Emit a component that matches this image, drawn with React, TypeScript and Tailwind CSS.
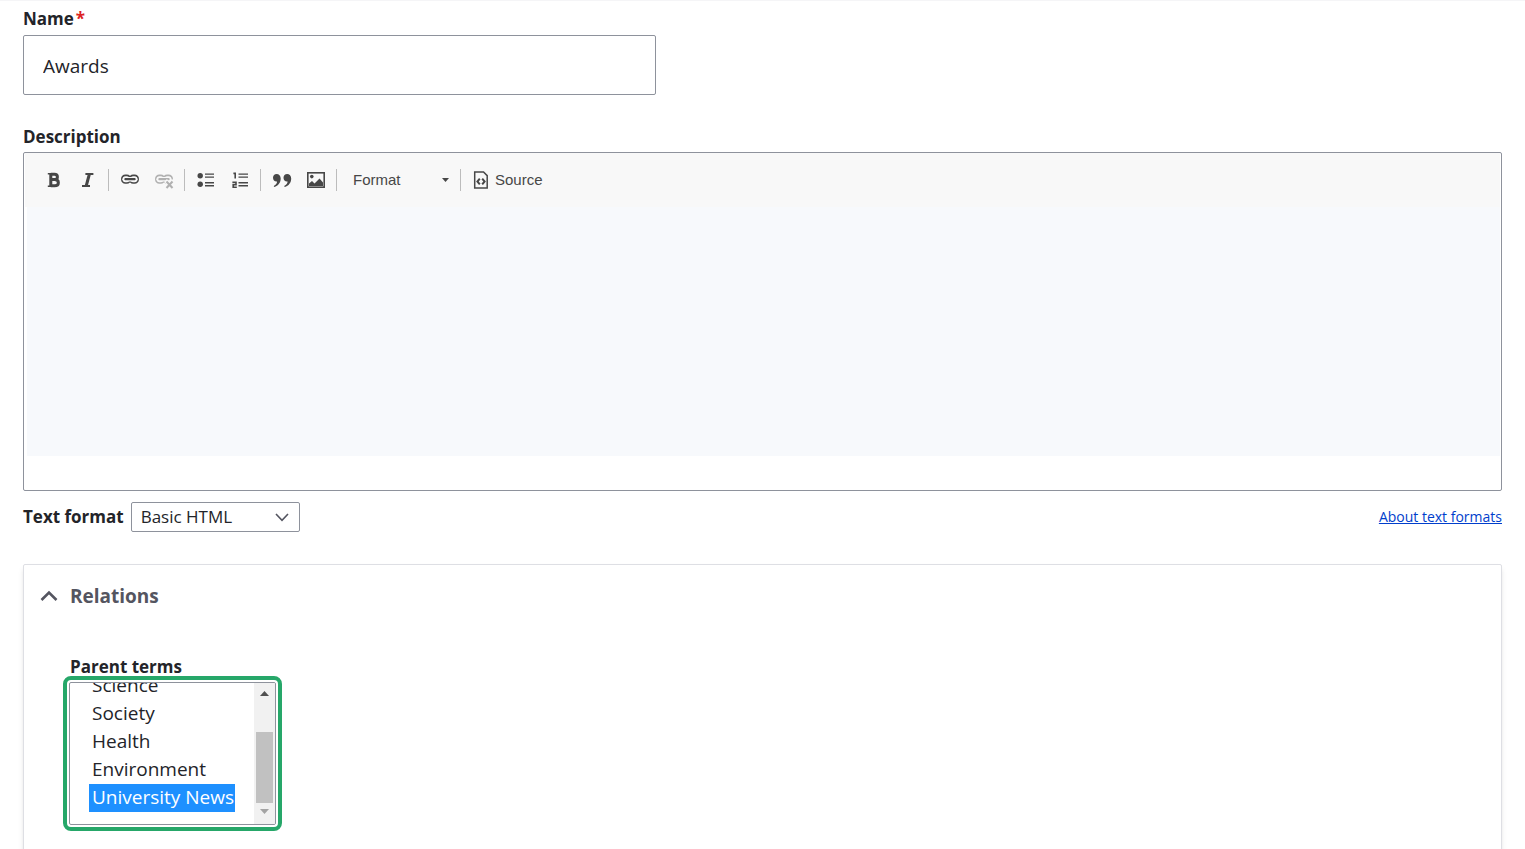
import { useEffect, useRef } from "react";
import type { ReactNode } from "react";

const PARENT_TERMS = [
  "Science",
  "Society",
  "Health",
  "Environment",
  "University News",
];

interface IToolbarButtonProps {
  label: string;
  disabled?: boolean;
  children: ReactNode;
}

function ToolbarButton({ label, disabled, children }: IToolbarButtonProps) {
  return (
    <button
      type="button"
      aria-label={label}
      disabled={disabled}
      className="flex h-6 w-[34px] items-center justify-center text-[#474747] disabled:opacity-40"
    >
      {children}
    </button>
  );
}

function Separator() {
  return <span className="mr-[4px] ml-[3px] h-[22px] w-px bg-[#bcbcbc]" />;
}

function BoldIcon() {
  return (
    <svg width="14" height="16" viewBox="0 0 14 16" fill="none" stroke="currentColor">
      <path d="M3.8 2.2H7.4C11.4 2.2 11.4 7.6 7.4 7.6H3.8M7.6 7.6C12.6 7.6 12.6 13.8 7.6 13.8H3.8M3.8 1V15" strokeWidth="3" />
      <path d="M0.8 1.8H4M0.8 14.2H4" strokeWidth="1.6" />
    </svg>
  );
}

function ItalicIcon() {
  return (
    <svg width="14" height="16" viewBox="0 0 14 16" fill="none" stroke="currentColor">
      <path d="M8.4 2L5.2 14" strokeWidth="3" />
      <path d="M4.4 2H12.4M1 14H9" strokeWidth="2" />
    </svg>
  );
}

function LinkIcon({ broken }: { broken?: boolean }) {
  return (
    <svg width="20" height="18" viewBox="0 0 20 18" fill="none" stroke="currentColor">
      <rect x="1.9" y="4.4" width="8.4" height="7.6" rx="3.4" strokeWidth="1.7" />
      <rect x="9.7" y="4.4" width="8.4" height="7.6" rx="3.4" strokeWidth="1.7" />
      <path d="M4.6 8.2h10.8" stroke="#f8f8f8" strokeWidth="4.4" strokeLinecap="round" />
      <path d="M5.4 8.2h9.2" strokeWidth="2.2" strokeLinecap="round" />
      {broken && (
        <>
          <path d="M11.500 9.500l8 8M19.500 9.500l-8 8" stroke="#f8f8f8" strokeWidth="4" />
          <path d="M12.500 10.500l6 6.500M18.500 10.500l-6 6.500" strokeWidth="2" />
        </>
      )}
    </svg>
  );
}

function BulletedListIcon() {
  return (
    <svg width="18" height="16" viewBox="0 0 18 16" fill="currentColor">
      <circle cx="3.2" cy="3.7" r="2.7" />
      <circle cx="3.2" cy="12.3" r="2.7" />
      <path d="M8 1.4h9v1.4H8zM8 4.4h9v1.4H8zM8 10h9v1.4H8zM8 13h9v1.4H8z" />
    </svg>
  );
}

function NumberedListIcon() {
  return (
    <svg width="18" height="18" viewBox="0 0 18 18" fill="currentColor">
      <path d="M7.5 2.4H17v1.4H7.5zM7.5 5.4H17v1.4H7.5zM7.5 11H17v1.4H7.5zM7.5 14H17v1.4H7.5z" />
      <path
        d="M2.4 2.4H4.2V7.6M1.4 11.2H5V13.6H2.2V16.2H5.8"
        fill="none"
        stroke="currentColor"
        strokeWidth="1.6"
      />
    </svg>
  );
}

function QuoteIcon() {
  return (
    <svg width="20" height="16" viewBox="0 0 20 16" fill="currentColor">
      <path d="M4.6 2C7 2 8.7 3.8 8.7 6.500C8.7 10.700 6.300 13.800 2.200 15L1.700 14C4 12.700 5 11.300 5.100 9.500C2.800 9.900 1 8.200 1 5.700C1 3.500 2.500 2 4.600 2z" />
      <path d="M15.100 2C17.500 2 19.200 3.800 19.200 6.500C19.200 10.700 16.800 13.800 12.700 15L12.200 14C14.500 12.700 15.500 11.300 15.600 9.500C13.300 9.900 11.500 8.200 11.500 5.700C11.500 3.500 13 2 15.100 2z" />
    </svg>
  );
}

function ImageIcon() {
  return (
    <svg width="18" height="16" viewBox="0 0 18 16" fill="currentColor">
      <rect x="0.8" y="0.8" width="16.4" height="14.4" fill="none" stroke="currentColor" strokeWidth="1.6" />
      <circle cx="4.8" cy="4.6" r="1.8" />
      <path d="M2 14V11.5L5 9L7.5 11.5L12.5 6.5L16 10.5V14z" />
    </svg>
  );
}

function SourceIcon() {
  return (
    <svg width="16" height="18" viewBox="0 0 16 18" fill="none" stroke="currentColor">
      <path d="M1.7 0.9H10.5L14.2 4.6V17H1.7z" strokeWidth="1.5" />
      <path d="M6.8 7.6L4.4 10.5L6.8 13.4M9.200 7.6L11.600 10.5L9.200 13.4" strokeWidth="2" />
    </svg>
  );
}

function Toolbar() {
  return (
    <div className="flex h-[54px] items-center bg-[#f8f8f8] pl-3 font-['Liberation_Sans',Arial,sans-serif] text-[15px] text-[#474747]">
      <ToolbarButton label="Bold">
        <BoldIcon />
      </ToolbarButton>
      <ToolbarButton label="Italic">
        <ItalicIcon />
      </ToolbarButton>
      <Separator />
      <ToolbarButton label="Link">
        <LinkIcon />
      </ToolbarButton>
      <ToolbarButton label="Unlink" disabled>
        <LinkIcon broken />
      </ToolbarButton>
      <Separator />
      <ToolbarButton label="Bulleted list">
        <BulletedListIcon />
      </ToolbarButton>
      <ToolbarButton label="Numbered list">
        <NumberedListIcon />
      </ToolbarButton>
      <Separator />
      <ToolbarButton label="Block quote">
        <QuoteIcon />
      </ToolbarButton>
      <ToolbarButton label="Image">
        <ImageIcon />
      </ToolbarButton>
      <Separator />
      <button type="button" className="flex h-6 w-[116px] items-center justify-between pr-2 pl-3">
        Format
        <svg width="7" height="4" viewBox="0 0 7 4" fill="currentColor">
          <path d="M0 0h7L3.5 4z" />
        </svg>
      </button>
      <Separator />
      <button type="button" className="flex h-6 items-center gap-1.5 pl-2">
        <SourceIcon />
        Source
      </button>
    </div>
  );
}

function ParentTermsSelect() {
  const listRef = useRef<HTMLSelectElement>(null);

  useEffect(() => {
    if (listRef.current) {
      listRef.current.scrollTop = listRef.current.scrollHeight;
    }
  }, []);

  return (
    <div className="w-[219px] rounded-lg border-4 border-[#26a769] p-0.5">
      <div className="flex h-[143px] overflow-hidden rounded-xs border border-[#8e929c]">
        <select
          ref={listRef}
          id="parent-terms"
          multiple
          defaultValue={["University News"]}
          className="h-full min-w-0 flex-1 overflow-y-scroll pr-[19px] pb-3 pl-[19px] text-[19px] text-[#232429] outline-none [scrollbar-width:none]"
        >
          {PARENT_TERMS.map((term) => (
            <option
              key={term}
              value={term}
              className="h-7 px-[3px] py-0 leading-7 checked:bg-[linear-gradient(#1e90ff,#1e90ff)] checked:[-webkit-text-fill-color:#fff]"
            >
              {term}
            </option>
          ))}
        </select>
        <div aria-hidden="true" className="flex w-[21px] flex-col items-center bg-[#f1f1f1] py-2">
          <svg width="9" height="5" viewBox="0 0 9 5" fill="#505050">
            <path d="M4.5 0L9 5H0z" />
          </svg>
          <div className="mt-9 h-[71px] w-[17px] bg-[#c1c1c1]" />
          <svg width="9" height="5" viewBox="0 0 9 5" fill="#a3a3a3" className="mt-1.5">
            <path d="M0 0h9L4.5 5z" />
          </svg>
        </div>
      </div>
    </div>
  );
}

export default function App() {
  return (
    <form className="h-screen overflow-hidden border-t border-[#f5f5f7] bg-white px-[23px] pt-1.5 font-['Open_Sans','Noto_Sans',sans-serif] text-[17px] text-[#232429]">
      <label htmlFor="name" className="block leading-6 font-bold">
        Name<span className="ml-0.5 text-[#dc2323]">*</span>
      </label>
      <input
        id="name"
        type="text"
        defaultValue="Awards"
        className="mt-1 block h-[60px] w-[633px] rounded-xs border border-[#8e929c] px-[19px] pt-0.5 text-[19px] outline-none"
      />

      <label htmlFor="description" className="mt-[30px] block leading-6 font-bold">
        Description
      </label>
      <div className="mt-[3px] overflow-hidden rounded-xs border border-[#8e929c] px-px">
        <Toolbar />
        <textarea
          id="description"
          className="ml-0.5 block h-[249px] w-[calc(100%-2px)] resize-none bg-[#f7f9fc] p-5 outline-none"
        />
        <div className="h-[34px]" />
      </div>

      <div className="mt-[11px] flex items-center justify-between">
        <div className="flex items-center gap-[7px]">
          <label htmlFor="text-format" className="font-bold">
            Text format
          </label>
          <div className="grid items-center">
            <select
              id="text-format"
              className="col-start-1 row-start-1 h-[30px] w-[169px] appearance-none rounded-xs border border-[#8e929c] bg-white pl-[9px] outline-none"
            >
              <option>Basic HTML</option>
            </select>
            <svg
              width="14"
              height="9"
              viewBox="0 0 14 9"
              fill="none"
              stroke="#545560"
              strokeWidth="1.6"
              className="pointer-events-none col-start-1 row-start-1 mr-[11px] justify-self-end"
            >
              <path d="M1 1l6 6.3L13 1" />
            </svg>
          </div>
        </div>
        <a href="#formats" className="pb-0.5 text-[14px] text-[#003ecc] underline">
          About text formats
        </a>
      </div>

      <details open className="mt-8 h-80 rounded-xs border border-[#dedfe4] shadow-md">
        <summary className="flex list-none items-center gap-3 px-4 pt-4 text-[19px] leading-[30px] font-bold text-[#545560]">
          <svg width="18" height="12" viewBox="0 0 18 12" fill="none" stroke="currentColor" strokeWidth="2.6">
            <path d="M1.5 10L9 2.5L16.5 10" />
          </svg>
          Relations
        </summary>
        <div className="mt-11 pl-[39px]">
          <label htmlFor="parent-terms" className="block h-[21px] pl-[7px] leading-6 font-bold">
            Parent terms
          </label>
          <ParentTermsSelect />
        </div>
      </details>
    </form>
  );
}
